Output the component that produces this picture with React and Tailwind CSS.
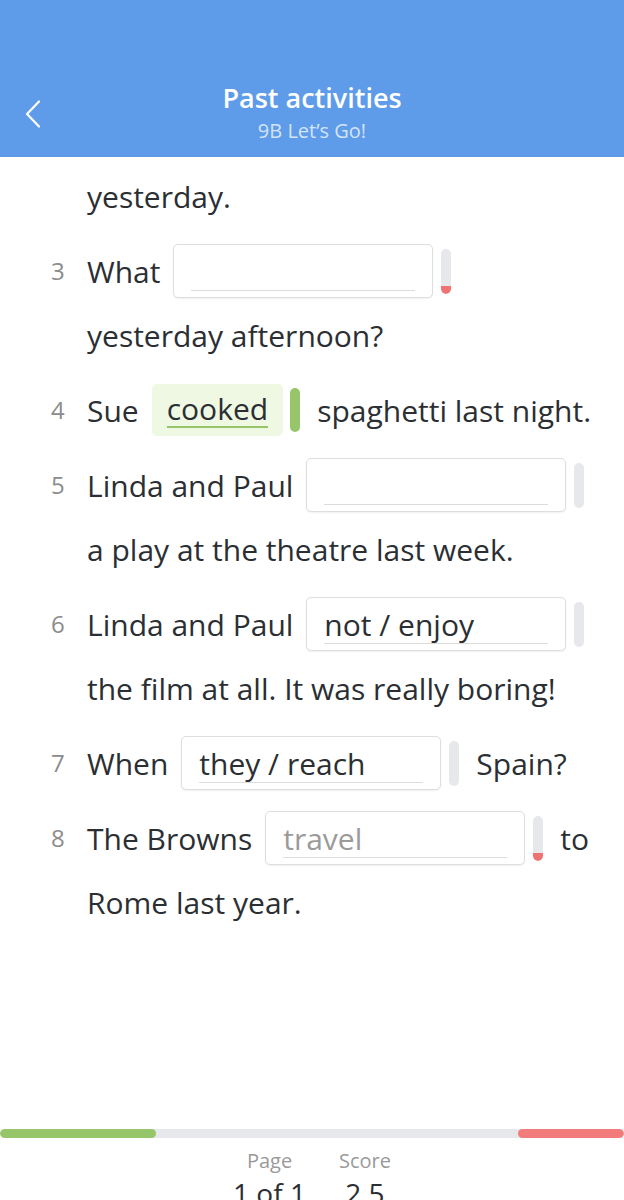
const font = { fontFamily: '"Open Sans", "Liberation Sans", sans-serif' }

function Blank({ value, placeholder, status }) {
  return (
    <>
      <div className="ml-[13px] flex h-[54px] w-[260px] shrink-0 items-center rounded-[5px] border border-[#dedede] bg-white pl-[17px] pr-[17px] shadow-[0_1px_2px_rgba(0,0,0,0.06)]">
        <div className="flex h-[40px] w-full items-end border-b border-[#dcdcdc] leading-[36px]">
          {value && <span className="text-[30px] text-[#2b2f33]">{value}</span>}
          {placeholder && <span className="text-[30px] text-[#9a9a9a]">{placeholder}</span>}
        </div>
      </div>
      <Bar status={status} />
    </>
  )
}

function Bar({ status }) {
  if (status === 'ok') {
    return <div className="ml-[7px] h-[44px] w-[10px] shrink-0 rounded-full bg-[#97c56a]" />
  }
  return (
    <div className="ml-[8px] flex h-[45px] w-[10px] shrink-0 flex-col justify-end overflow-hidden rounded-full bg-[#e6e8ec]">
      {status === 'wrong' && <div className="h-[8px] w-full rounded-b-full bg-[#f07272]" />}
    </div>
  )
}

function Line({ num, children }) {
  return (
    <div className="flex h-[64px] items-center">
      <div className="w-[87px] shrink-0 pl-[51px] text-[24px] text-[#8c8c8c]">{num}</div>
      <div className="flex items-center whitespace-nowrap text-[30px] text-[#2b2f33]">{children}</div>
    </div>
  )
}

function Item({ children }) {
  return <div className="flex flex-col">{children}</div>
}

export default function App() {
  return (
    <div className="flex h-screen flex-col overflow-hidden bg-white" style={font}>
      {/* Header */}
      <header className="relative flex h-[157px] shrink-0 flex-col items-center bg-[#5e9be8] pt-[79px]">
        <svg className="absolute left-[24px] top-[100px]" width="18" height="28" viewBox="0 0 18 28" fill="none">
          <polyline points="15,1.5 3,14 15,26.5" stroke="white" strokeWidth="2.2" strokeLinecap="round" strokeLinejoin="round" />
        </svg>
        <h1 className="text-[27px] font-semibold leading-[38px] text-white">Past activities</h1>
        <p className="text-[20px] leading-[28px] text-[#d3e4fb]">9B Let’s Go!</p>
      </header>

      {/* Exercise */}
      <main className="flex flex-1 flex-col gap-[11px] pt-[7px]">
        <Item>
          <Line>yesterday.</Line>
        </Item>
        <Item>
          <Line num="3">
            What
            <Blank status="wrong" />
          </Line>
          <Line>yesterday afternoon?</Line>
        </Item>
        <Item>
          <Line num="4">
            Sue
            <div className="ml-[13px] flex h-[52px] shrink-0 items-center justify-center rounded-[5px] bg-[#eef8e3] px-[15px]">
              <span className="border-b-2 border-[#97c56a] leading-[34px]">cooked</span>
            </div>
            <Bar status="ok" />
            <span className="ml-[17px]">spaghetti last night.</span>
          </Line>
        </Item>
        <Item>
          <Line num="5">
            Linda and Paul
            <Blank />
          </Line>
          <Line>a play at the theatre last week.</Line>
        </Item>
        <Item>
          <Line num="6">
            Linda and Paul
            <Blank value="not / enjoy" />
          </Line>
          <Line>the film at all. It was really boring!</Line>
        </Item>
        <Item>
          <Line num="7">
            When
            <Blank value="they / reach" />
            <span className="ml-[17px]">Spain?</span>
          </Line>
        </Item>
        <Item>
          <Line num="8">
            The Browns
            <Blank placeholder="travel" status="wrong" />
            <span className="ml-[17px]">to</span>
          </Line>
          <Line>Rome last year.</Line>
        </Item>
      </main>

      {/* Footer */}
      <footer className="h-[71px] shrink-0">
        <div className="flex h-[9px] w-full overflow-hidden rounded-full bg-[#e6e8eb]">
          <div className="h-full w-[156px] rounded-full bg-[#97c56a]" />
          <div className="flex-1" />
          <div className="h-full w-[106px] rounded-full bg-[#f27b7b]" />
        </div>
        <div className="mt-[9px] flex justify-center gap-[33px]">
          <div className="flex flex-col items-center">
            <span className="text-[20px] leading-[28px] text-[#9a9a9a]">Page</span>
            <span className="text-[28px] leading-[36px] text-[#2b2f33]">1 of 1</span>
          </div>
          <div className="flex flex-col items-center">
            <span className="text-[20px] leading-[28px] text-[#9a9a9a]">Score</span>
            <span className="text-[28px] leading-[36px] text-[#2b2f33]">2.5</span>
          </div>
        </div>
      </footer>
    </div>
  )
}
